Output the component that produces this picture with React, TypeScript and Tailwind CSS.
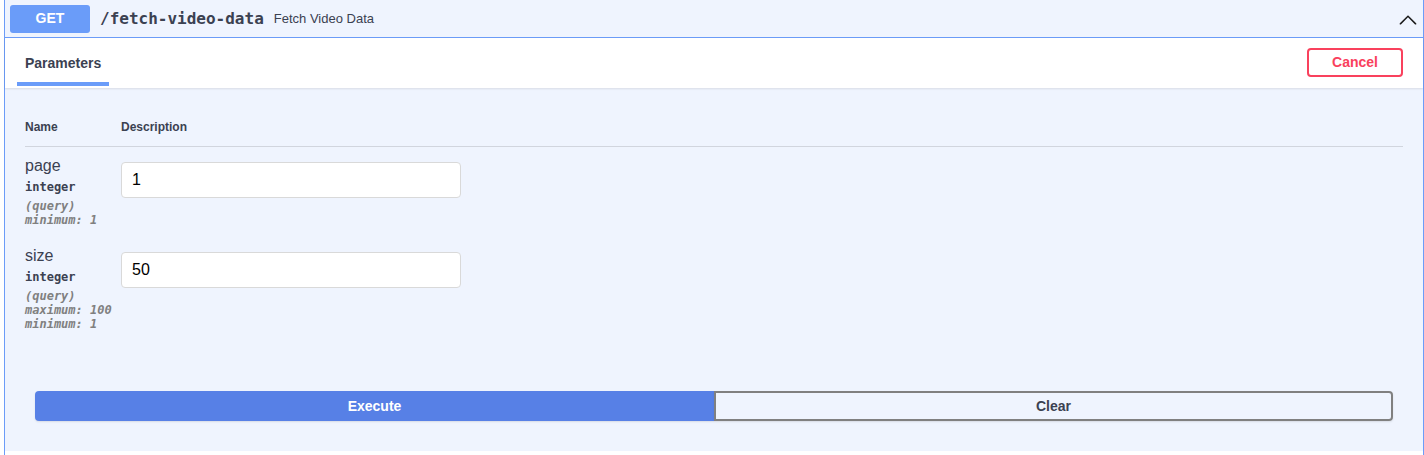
import React from 'react'

const sans = "font-['Liberation_Sans',Arial,sans-serif]"
const mono = "font-['DejaVu_Sans_Mono',monospace]"

type Param = {
  name: string
  value: string
  notes: string[]
}

const params: Param[] = [
  { name: 'page', value: '1', notes: ['minimum: 1'] },
  { name: 'size', value: '50', notes: ['maximum: 100', 'minimum: 1'] },
]

function ChevronUp() {
  return (
    <svg width="22" height="22" viewBox="0 0 20 20" className="text-[#1b1b1b]">
      <path
        fill="currentColor"
        d="M17.418 14.908c-.268.27-.707.27-.979 0l-6.44-6.470-6.44 6.470c-.27.27-.708.27-.978 0s-.27-.707 0-.977l6.93-6.970c.27-.27.71-.27.98 0l6.928 6.970c.268.27.268.708 0 .977z"
      />
    </svg>
  )
}

export default function App() {
  return (
    <div className={`min-h-[455px] bg-white pl-[4px] ${sans}`}>
      <div className="flex min-h-[455px] flex-col border-x border-[#6c9cf8] bg-[#eff4fe]">
        {/* Summary row */}
        <div className="flex h-[38px] items-center border-b border-[#6c9cf8] pl-[5px] pr-[4px]">
          <div className="flex h-[28px] w-[80px] items-center justify-center rounded-[3px] bg-[#6a9cf9] text-[14px] font-bold text-white">
            GET
          </div>
          <span className={`ml-[10px] text-[16px] font-bold text-[#3b4151] ${mono}`}>/fetch-video-data</span>
          <span className="ml-[10px] text-[13px] text-[#3b4151]">Fetch Video Data</span>
          <div className="ml-auto flex items-center">
            <ChevronUp />
          </div>
        </div>

        {/* Section header */}
        <div className="flex h-[50px] items-stretch justify-between bg-white pl-[12px] pr-[20px] shadow-[0_1px_2px_rgba(0,0,0,0.1)]">
          <div className="flex items-end pb-[2px]">
            <div className="border-b-4 border-[#6a9cf9] px-[8px] pb-[11px] text-[14px] leading-[16px] font-bold text-[#3b4151]">
              Parameters
            </div>
          </div>
          <div className="flex items-center pb-[1px]">
            <button className="h-[29px] w-[96px] rounded-[4px] border-2 border-[#f9415d] text-[14px] font-bold text-[#f9415d]">
              Cancel
            </button>
          </div>
        </div>

        {/* Parameters table */}
        <div className="p-[20px]">
          <div className="flex border-b border-[#d1d5de] py-[12px] text-[12px] leading-[14px] font-bold text-[#3b4151]">
            <div className="w-[96px]">Name</div>
            <div>Description</div>
          </div>
          {params.map((p) => (
            <div key={p.name} className="flex py-[10px]">
              <div className="w-[96px] text-[#3b4151]">
                <div className="text-[16px] leading-[18px]">{p.name}</div>
                <div className={`py-[5px] text-[12px] leading-[14px] font-bold ${mono}`}>integer</div>
                <div className={`text-[12px] leading-[14px] font-semibold text-[#808080] italic ${mono}`}>
                  <div>(query)</div>
                  {p.notes.map((n) => (
                    <div key={n}>{n}</div>
                  ))}
                </div>
              </div>
              <div>
                <input
                  readOnly
                  value={p.value}
                  className="my-[5px] h-[36px] w-[340px] rounded-[4px] border border-[#d9d9d9] bg-white px-[10px] text-[16px] text-black outline-none"
                />
              </div>
            </div>
          ))}
        </div>

        {/* Execute / Clear */}
        <div className="flex px-[30px] pt-[30px] pb-[30px]">
          <button className="h-[30px] w-1/2 rounded-l-[4px] bg-[#5780e6] text-[14px] font-bold text-white shadow-[0_1px_2px_rgba(0,0,0,0.1)]">
            Execute
          </button>
          <button className="h-[30px] w-1/2 rounded-r-[4px] border-2 border-[#808080] text-[14px] font-bold text-[#3b4151] shadow-[0_1px_2px_rgba(0,0,0,0.1)]">
            Clear
          </button>
        </div>

        <div className="flex-1 bg-white" />
      </div>
    </div>
  )
}
